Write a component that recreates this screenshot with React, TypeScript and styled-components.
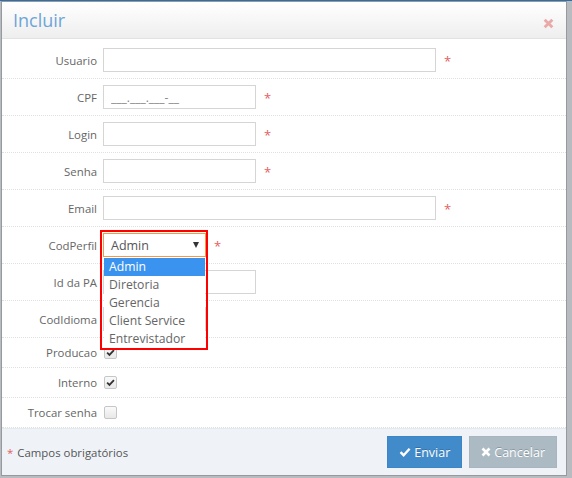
import styled, { createGlobalStyle } from 'styled-components';

const GlobalStyle = createGlobalStyle`
  html, body {
    margin: 0;
    padding: 0;
    background: #b8bcc1;
    font-family: 'Open Sans', 'Liberation Sans', sans-serif;
  }
`;

const Page = styled.div`
  width: 572px;
  height: 478px;
  border-top: 1px solid #2f6ea6;
  box-sizing: border-box;
  overflow: hidden;
`;

const Modal = styled.div`
  width: 564px;
  margin: 1px 0 0 2px;
  background: #fff;
  box-shadow: 0 0 0 1px rgba(0, 0, 0, 0.18);
`;

const Header = styled.div`
  display: flex;
  justify-content: space-between;
  align-items: center;
  height: 36px;
  padding: 0 12px 0 11px;
  background: linear-gradient(#ffffff, #eeeeee);
  border-bottom: 1px solid #e2e2e2;
`;

const Title = styled.h4`
  margin: 0;
  font-size: 18px;
  font-weight: 400;
  color: #6ea6d7;
`;

const Close = styled.span`
  display: flex;
  margin-top: 6px;
`;

const Body = styled.div`
  padding-top: 3px;
`;

const Row = styled.div<{ $check?: boolean }>`
  display: flex;
  align-items: center;
  column-gap: 6px;
  padding: ${(p) => (p.$check ? '7px 0' : '6px 0')};
  border-bottom: 1px dotted #e0e0e0;
`;

const Label = styled.label`
  width: 95px;
  text-align: right;
  font-size: 11.4px;
  line-height: 15px;
  color: #666;
`;

const Field = styled.div`
  position: relative;
  display: flex;
  align-items: center;
  column-gap: 8px;
  height: 24px;
`;

const Input = styled.input<{ $wide?: boolean }>`
  box-sizing: border-box;
  width: ${(p) => (p.$wide ? '333px' : '153px')};
  height: 24px;
  padding: 3px 7px;
  border: 1px solid #d5d5d5;
  font-family: inherit;
  font-size: 12px;
  color: #777;
  outline: none;

  &::placeholder {
    color: #888;
  }
`;

const Required = styled.span`
  color: #e35f5f;
  font-size: 13px;
  line-height: 1;
  margin-top: 2px;
`;

const Select = styled.div<{ $focus?: boolean }>`
  box-sizing: border-box;
  display: flex;
  justify-content: space-between;
  align-items: center;
  width: 103px;
  height: 24px;
  padding: 0 6px 0 7px;
  border: 1px solid ${(p) => (p.$focus ? '#f59942' : '#d5d5d5')};
  font-size: 12.5px;
  color: #555;
`;

const Arrow = styled.span`
  margin-left: auto;
  width: 0;
  height: 0;
  border-left: 3px solid transparent;
  border-right: 3px solid transparent;
  border-top: 6px solid #333;
`;

const Dropdown = styled.ul`
  position: absolute;
  top: 25px;
  left: 1px;
  z-index: 2;
  width: 101px;
  margin: 0;
  padding: 0;
  list-style: none;
  background: #fff;
`;

const Option = styled.li<{ $active?: boolean }>`
  height: 18px;
  padding-left: 5px;
  line-height: 18px;
  font-size: 12.2px;
  color: ${(p) => (p.$active ? '#fff' : '#666')};
  background: ${(p) => (p.$active ? '#3b93f0' : 'transparent')};
`;

const Highlight = styled.div`
  position: absolute;
  top: -3px;
  left: -3px;
  z-index: 3;
  width: 108px;
  height: 120px;
  box-sizing: border-box;
  border: 2px solid #ff0000;
  pointer-events: none;
`;

const Box = styled.span`
  display: flex;
  justify-content: center;
  align-items: center;
  box-sizing: border-box;
  width: 13px;
  height: 13px;
  margin-left: 1px;
  border: 1px solid #c6c6c6;
  border-radius: 2px;
  background: linear-gradient(#fafafa, #e8e8e8);
`;

const Footer = styled.div`
  display: flex;
  justify-content: space-between;
  align-items: center;
  height: 46px;
  padding: 0 9px 0 5px;
  background: #eff3f8;
  border-top: 1px solid #e4e9ee;
`;

const Note = styled.span`
  font-size: 11.4px;
  color: #555;

  > b {
    font-weight: 400;
    color: #e35f5f;
    margin-right: 4px;
  }
`;

const Buttons = styled.div`
  display: flex;
  column-gap: 7px;
`;

const Button = styled.button<{ $grey?: boolean }>`
  display: flex;
  align-items: center;
  justify-content: center;
  column-gap: 3px;
  height: 32px;
  padding: 0 11px;
  border: 1px solid ${(p) => (p.$grey ? '#a7b5be' : '#3d86c6')};
  background: ${(p) => (p.$grey ? '#abbac3' : '#428bca')};
  color: #fff;
  font-family: inherit;
  font-size: 12.5px;
  text-shadow: 0 -1px 0 rgba(0, 0, 0, 0.2);
  cursor: pointer;
`;

const CheckIcon = ({ color = '#fff', size = 12 }: { color?: string; size?: number }) => (
  <svg width={size} height={size} viewBox="0 0 12 12">
    <path d="M1.5 6.2 L4.6 9.2 L10.6 2.8" fill="none" stroke={color} strokeWidth="2.4" />
  </svg>
);

const TimesIcon = ({ color = '#fff', size = 10 }: { color?: string; size?: number }) => (
  <svg width={size} height={size} viewBox="0 0 10 10">
    <path d="M1.5 1.5 L8.5 8.5 M8.5 1.5 L1.5 8.5" fill="none" stroke={color} strokeWidth="2.6" />
  </svg>
);

function Checkbox({ checked }: { checked?: boolean }) {
  return <Box>{checked && <CheckIcon color="#333" size={9} />}</Box>;
}

const perfis = ['Admin', 'Diretoria', 'Gerencia', 'Client Service', 'Entrevistador'];

function App() {
  return (
    <Page>
      <GlobalStyle />
      <Modal>
        <Header>
          <Title>Incluir</Title>
          <Close>
            <TimesIcon color="#e9a9a9" size={11} />
          </Close>
        </Header>
        <Body>
          <Row>
            <Label>Usuario</Label>
            <Field>
              <Input $wide />
              <Required>*</Required>
            </Field>
          </Row>
          <Row>
            <Label>CPF</Label>
            <Field>
              <Input placeholder="___.___.___-__" />
              <Required>*</Required>
            </Field>
          </Row>
          <Row>
            <Label>Login</Label>
            <Field>
              <Input />
              <Required>*</Required>
            </Field>
          </Row>
          <Row>
            <Label>Senha</Label>
            <Field>
              <Input type="password" />
              <Required>*</Required>
            </Field>
          </Row>
          <Row>
            <Label>Email</Label>
            <Field>
              <Input $wide />
              <Required>*</Required>
            </Field>
          </Row>
          <Row>
            <Label>CodPerfil</Label>
            <Field>
              <Select $focus>
                Admin
                <Arrow />
              </Select>
              <Required>*</Required>
              <Dropdown>
                {perfis.map((p, i) => (
                  <Option key={p} $active={i === 0}>
                    {p}
                  </Option>
                ))}
              </Dropdown>
              <Highlight />
            </Field>
          </Row>
          <Row>
            <Label>Id da PA</Label>
            <Field>
              <Input />
            </Field>
          </Row>
          <Row>
            <Label>CodIdioma</Label>
            <Field>
              <Select>
                <Arrow />
              </Select>
            </Field>
          </Row>
          <Row $check>
            <Label>Producao</Label>
            <Checkbox checked />
          </Row>
          <Row $check>
            <Label>Interno</Label>
            <Checkbox checked />
          </Row>
          <Row $check>
            <Label>Trocar senha</Label>
            <Checkbox />
          </Row>
        </Body>
        <Footer>
          <Note>
            <b>*</b>Campos obrigatórios
          </Note>
          <Buttons>
            <Button>
              <CheckIcon />
              Enviar
            </Button>
            <Button $grey>
              <TimesIcon />
              Cancelar
            </Button>
          </Buttons>
        </Footer>
      </Modal>
    </Page>
  );
}

export default App;
